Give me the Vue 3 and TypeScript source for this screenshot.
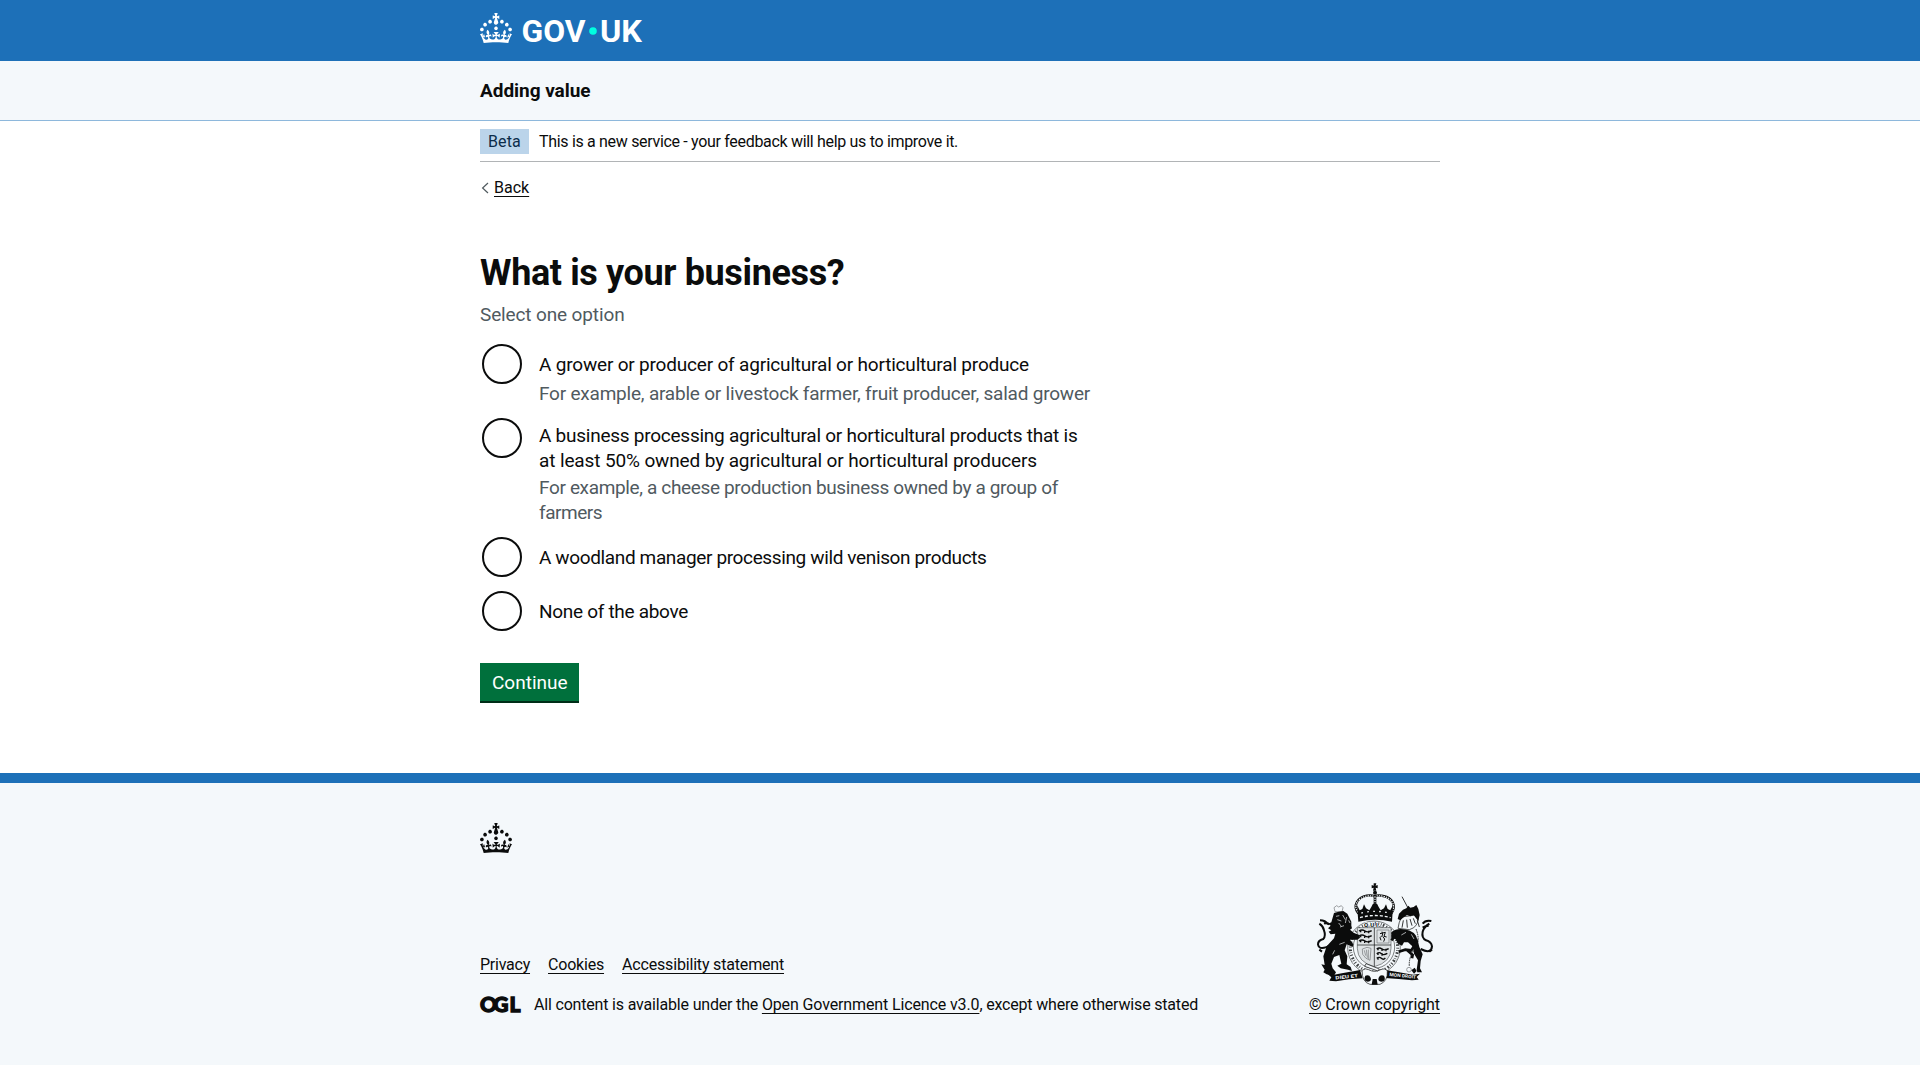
<script setup lang="ts">
import { ref } from 'vue'

interface TextLine {
  text: string
  spacing: number
}
interface Option {
  id: string
  label: TextLine[]
  hint: TextLine[]
  lift?: boolean
}

const crownPath =
  'M22.6 10.4c-1 .4-2-.1-2.4-1-.4-.9.1-2 1-2.4.9-.4 2 .1 2.4 1s-.1 2-1 2.4m-5.9 6.7c-.9.4-2-.1-2.4-1-.4-.9.1-2 1-2.4.9-.4 2 .1 2.4 1s-.1 2-1 2.4m10.8-3.7c-1 .4-2-.1-2.4-1-.4-.9.1-2 1-2.4.9-.4 2 .1 2.4 1s0 2-1 2.4m3.3 4.8c-1 .4-2-.1-2.4-1-.4-.9.1-2 1-2.4.9-.4 2 .1 2.4 1s-.1 2-1 2.4M17 4.7l2.3 1.2V2.5l-2.3.7-.2-.2.9-3h-3.4l.9 3-.2.2c-.1.1-2.3-.7-2.3-.7v3.4L15 4.7c.1.1.1.2.2.2l-1.3 4c-.1.2-.1.4-.1.6 0 1.1.8 2 1.9 2.2h.7c1-.2 1.9-1.1 1.9-2.1 0-.2 0-.4-.1-.6l-1.3-4c-.1-.2 0-.2.1-.3m-7.6 5.7c.9.4 2-.1 2.4-1 .4-.9-.1-2-1-2.4-.9-.4-2 .1-2.4 1s0 2 1 2.4m-5 3c.9.4 2-.1 2.4-1 .4-.9-.1-2-1-2.4-.9-.4-2 .1-2.4 1s.1 2 1 2.4m-3.2 4.8c.9.4 2-.1 2.4-1 .4-.9-.1-2-1-2.4-.9-.4-2 .1-2.4 1s0 2 1 2.4m14.8 11c4.4 0 8.6.3 12.3.8 1.1-4.5 2.4-7 3.7-8.8l-2.5-.9c.2 1.3.3 1.9 0 2.7-.4-.4-.8-1.1-1.1-2.3l-1.2 4c.7-.5 1.3-.8 2-.9-1.1 2.5-2.6 3.1-3.5 3-1.1-.2-1.7-1.2-1.5-2.1.3-1.2 1.5-1.5 2.1-.1 1.1-2.3-.8-3-2-2.3 1.9-1.9 2.1-3.5.6-5.6-2.1 1.6-2.1 3.2-1.2 5.5-1.2-1.4-3.2-.6-2.5 1.6.9-1.4 2.1-.5 1.9.8-.2 1.1-1.7 2.1-3.5 1.9-2.7-.2-2.9-2.1-2.9-3.6.7-.1 1.9.5 2.9 1.9l.4-4.3c-1.1 1.1-2.1 1.4-3.2 1.4.4-1.2 2.1-3 2.1-3h-5.4s1.7 1.9 2.1 3c-1.1 0-2.1-.2-3.2-1.4l.4 4.3c1-1.4 2.2-2 2.9-1.9-.1 1.5-.2 3.4-2.9 3.6-1.9.2-3.4-.8-3.5-1.9-.2-1.3 1-2.2 1.9-.8.7-2.3-1.2-3-2.5-1.6.9-2.2.9-3.9-1.2-5.5-1.5 2-1.3 3.7.6 5.6-1.2-.7-3.1 0-2 2.3.6-1.4 1.8-1.1 2.1.1.2.9-.3 1.9-1.5 2.1-.9.2-2.4-.5-3.5-3 .6 0 1.2.3 2 .9l-1.2-4c-.3 1.1-.7 1.9-1.1 2.3-.3-.8-.2-1.4 0-2.7l-2.9.9C1.3 23 2.6 25.5 3.7 30c3.7-.5 7.9-.8 12.3-.8'

const options: Option[] = [
  {
    id: 'grower',
    label: [{ text: 'A grower or producer of agricultural or horticultural produce', spacing: -0.191 }],
    hint: [{ text: 'For example, arable or livestock farmer, fruit producer, salad grower', spacing: -0.21 }],
  },
  {
    id: 'processor',
    lift: true,
    label: [
      { text: 'A business processing agricultural or horticultural products that is', spacing: -0.25 },
      { text: 'at least 50% owned by agricultural or horticultural producers', spacing: -0.125 },
    ],
    hint: [
      { text: 'For example, a cheese production business owned by a group of', spacing: -0.353 },
      { text: 'farmers', spacing: -0.45 },
    ],
  },
  {
    id: 'woodland',
    label: [{ text: 'A woodland manager processing wild venison products', spacing: -0.367 }],
    hint: [],
  },
  { id: 'none', label: [{ text: 'None of the above', spacing: -0.3 }], hint: [] },
]

const selected = ref('')
</script>

<template>
  <div class="page">
    <header class="header">
      <div class="container header-inner">
        <svg class="crown" viewBox="0 0 32 30" width="32" height="30"><path :d="crownPath" /></svg>
        <svg class="wordmark" width="122" height="36" viewBox="0 0 122 36">
          <text x="0.5" y="29" textLength="64" lengthAdjust="spacingAndGlyphs">GOV</text>
          <circle cx="72" cy="18" r="3.8" />
          <text x="79" y="29" textLength="42" lengthAdjust="spacingAndGlyphs">UK</text>
        </svg>
      </div>
    </header>
    <section class="service">
      <div class="container"><span class="service-name">Adding value</span></div>
    </section>

    <div class="container">
      <div class="phase">
        <strong class="tag">Beta</strong>
        <span class="phase-text">This is a new service - your feedback will help us to improve it.</span>
      </div>
      <a class="back"><svg width="8" height="12" viewBox="0 0 8 12"><path d="M7 1 1.6 6 7 11" /></svg><span>Back</span></a>

      <main class="main">
        <h1>What is your business?</h1>
        <p class="lead">Select one option</p>
        <form @submit.prevent>
          <label v-for="o in options" :key="o.id" class="option" :class="{ lift: o.lift }">
            <input v-model="selected" type="radio" name="business" :value="o.id" />
            <span class="option-text">
              <span v-for="l in o.label" :key="l.text" class="line" :style="{ letterSpacing: l.spacing + 'px' }">{{ l.text }}</span>
              <span v-if="o.hint.length" class="hint">
                <span v-for="l in o.hint" :key="l.text" class="line" :style="{ letterSpacing: l.spacing + 'px' }">{{ l.text }}</span>
              </span>
            </span>
          </label>
          <button class="continue" type="submit">Continue</button>
        </form>
      </main>
    </div>

    <footer class="footer">
      <div class="container">
        <svg class="crown dark" viewBox="0 0 32 30" width="32" height="30"><path :d="crownPath" /></svg>
        <div class="meta">
          <div>
            <nav class="links">
              <a class="privacy">Privacy</a><a class="cookies">Cookies</a><a class="accessibility">Accessibility statement</a>
            </nav>
            <div class="licence">
              <svg class="ogl" width="42" height="20" viewBox="0 0 42 20">
                <text x="-0.1" y="17.3">O</text><text x="13.2" y="17.3">G</text><text x="29.6" y="17.3">L</text>
              </svg>
              <span class="licence-text">All content is available under the <a>Open Government Licence v3.0</a>, except where otherwise stated</span>
            </div>
          </div>
          <div class="copyright">
            <svg class="arms" viewBox="80 35 354 312" width="118" height="104">
              <!-- royal crown -->
              <path d="M253 39h8l-2 7 6-2v10l-6-2 2 9h-10l2-9-6 2v-10l6 2z" />
              <circle cx="257" cy="67" r="6" />
              <path class="stroke" stroke-width="7" d="M207 130C188 105 206 81 232 76q16-2 24 2 10-5 26-1c26 5 41 28 24 53" />
              <path class="dots" stroke-width="3.5" stroke-dasharray="4 3" d="M206 126C189 105 207 82 232 77q16-2 24 2 10-5 26-1c24 5 39 25 26 48" />
              <path class="stroke" stroke-width="8" d="M257 76v46" />
              <path class="dots" stroke-width="3.5" stroke-dasharray="4 3" d="M257 78v30" />
              <path d="M203 104l8 16 8-4 5-14 6 12 10 6 6-10 4-8 7-4 7 4 4 8 6 10 10-6 6-12 5 14 8 4 8-16-3 50q-50-12-101 0z" />
              <path class="dots" stroke-width="4" stroke-dasharray="9 6" d="M212 142q46-13 92 0" />
              <path class="dots" stroke-width="4" stroke-dasharray="5 13" d="M216 128q40-10 84 0" />
              <!-- garter and shield -->
              <ellipse class="ring" cx="254" cy="232" rx="79" ry="80" />
              <ellipse class="lettering" cx="254" cy="232" rx="71" ry="73" />
              <ellipse class="ring" cx="254" cy="230" rx="62" ry="64" />
              <text class="garter" x="224" y="169">QUI</text>
              <path class="shield" d="M204 172h101v62q0 42-50 55-50-13-51-55z" />
              <path class="stroke" stroke-width="2" d="M255 172v117M204 224h101" />
              <path class="stroke" stroke-width="4" d="M209 182q9-6 18 0t20-1M209 197q9-6 18 0t20-1M209 212q9-6 18 0t20-1M214 178v8m12-6v8m12-7v8M214 193v8m12-6v8m12-7v8M214 208v8m12-6v8m12-7v8M262 236q8-6 16 0t20-1M262 250q8-6 14 0t18-1M262 264q8-6 14 0t12-1M266 232v8m12-6v8m12-7v8M266 246v8m12-6v8M266 260v8" />
              <path class="gray" d="M263 179h36v39h-36zM219 236q15-9 26-2l-3 36q-14-4-22-18zM225 240l4 16M231 238l3 24M237 238v28" />
              <path class="stroke" stroke-width="3" d="M278 184l2 10-8 8 3 8M272 190l16-4-4 12 8 2M280 198l6 8-3 8" />
              <!-- lion -->
              <path class="gray" d="M137 124l-3-12 8-6 6 4 8-4 5 6-3 12z" />
              <path class="stroke" stroke-width="6" d="M128 222q-38 22-42 0 0-12 16-16 8-10 2-26-2-12-14-20m2-10q16 0 24 12M90 238l8 6M104 160q8-4 16 2" />
              <path d="M134 128l14-4 14-2 12 8 6 12 6 12 0 12 2 8-6 4 12 10 16 6 2 8-8 6-22 0 10 14-2 8-18-8-6 18 8 18-2 24 12 8 4 12-12-4-22-4-10-8 12-6-6-26-16 6-8 20 4 14 10 12-6 10-22-4-10-6 4-8-10-16 10 2-4-26 10-30 22-24 4-14-14 2-6-8 8-4-10-6 8-8-8-6 10-4z" />
              <path class="cut" d="M140 138l10-2m-6 12 12 4m4-18 8 14m4-8-4 18m-20 0 8 10M150 222l16-6M130 252l6-12M152 170l12-4M178 150l4 8" />
              <!-- unicorn -->
              <path class="stroke" stroke-width="2.5" d="M338 79l17 32" />
              <path class="stroke" stroke-width="6" d="M394 236q32 16 34-8-2-14-18-18-14-8-10-26 4-14 20-24m6-8q-18-4-26 8M428 238l-8 6M400 172q8-6 18-6" />
              <path class="fringe" d="M336 140q-8 18-10 34l34 4q26-8 26-32l-6-12z" />
              <path d="M325 146l4-16 12-12 10-4 6-8 6 6 10-2 8-6 6 12 4 18-4 18-8-10-6-8-10 4-10-4-12 8-8 8z" />
              <path class="stroke" stroke-width="2.5" d="M342 150l-4 22M352 148l2 24M362 146l6 20M372 144l6 16M384 150l6 20" />
              <path d="M306 186q12-10 28-10 32 0 46 20l6 18-2 20-10-2-18-16-12 0-6 10-12-6-8-14-12-2z" />
              <path d="M384 206l6 24 10 22-6 20-2 22 6 12h-14l-2-8 4-28-12-20-4-24z" />
              <path class="stroke" stroke-width="8" d="M376 224l-10 16-18-2-20 6M352 238l18 16-2 10M318 196l-12 14" />
              <path class="stroke" stroke-width="2.5" stroke-dasharray="5 2" d="M380 176q16 40-8 66-14 22-12 46" />
              <path class="cut" d="M350 186l-14 8M366 192l8 14" />
              <circle class="gray" cx="359" cy="298" r="7" />
              <path d="M366 300l10-8 6 10-8 8z" />
              <!-- motto scrolls and base -->
              <path d="M114 310l20 3q50-9 78-14l8 25q-42 2-80 9l-20-2 6-10zM392 310l-20 3q-46-7-78-13l-6 23q40 2 80 7l20-2-6-8z" />
              <text x="138" y="324" textLength="68" lengthAdjust="spacingAndGlyphs" transform="rotate(-6 172 318)">DIEU ET</text>
              <text x="300" y="321" textLength="80" lengthAdjust="spacingAndGlyphs" transform="rotate(6 340 318)">MON DROIT</text>
              <path class="light-fill" d="M218 300q10-8 20-2 18 10 36 0 14-6 20 4 2 30-22 40h-30q-24-6-24-42z" />
              <path d="M228 316q12-4 16 6t-8 12q-16-2-8-18zM284 316q-12-4-16 6t8 12q16-2 8-18zM250 326h12l3 17h-18z" />
              <path class="light-fill" d="M226 288l40 14 4-6-40-16z" />
            </svg>
            <a>© Crown copyright</a>
          </div>
        </div>
      </div>
    </footer>
  </div>
</template>

<style>
body {
  background: #fff;
}
</style>

<style scoped>
.page {
  font-family: Roboto, "Liberation Sans", sans-serif;
  font-size: 16px;
  line-height: 20px;
  color: #0b0c0c;
  min-height: 1065px;
  display: flex;
  flex-direction: column;
  white-space: nowrap;
}
.container {
  width: 960px;
  margin: 0 auto;
}
.header {
  height: 61px;
  background: #1d70b8;
}
.header-inner {
  display: flex;
  align-items: flex-start;
  gap: 9px;
  padding-top: 13px;
}
.crown {
  display: block;
  fill: #fff;
}
.crown.dark {
  fill: #0b0c0c;
}
.wordmark {
  overflow: visible;
  fill: #fff;
  font: 700 31px Roboto, sans-serif;
}
.wordmark circle {
  fill: #00ffe0;
}
.service {
  height: 59px;
  background: #f4f8fb;
  border-bottom: 1px solid #8eb8dc;
  font-size: 19px;
  font-weight: 700;
  line-height: 25px;
}
.service .container {
  padding-top: 17px;
}
.service-name {
  letter-spacing: -0.04px;
}
.phase {
  display: flex;
  align-items: center;
  height: 25px;
  padding: 8px 0 7px;
  border-bottom: 1px solid #b1b4b6;
}
.tag {
  box-sizing: border-box;
  width: 49px;
  height: 25px;
  padding: 3px 8px 2px;
  margin-right: 10px;
  background: #bbd4ea;
  color: #0c2d4a;
  font-weight: 400;
  letter-spacing: 0.1px;
}
.phase-text {
  padding-top: 1px;
  letter-spacing: -0.318px;
}
.back {
  display: flex;
  align-items: center;
  width: max-content;
  margin-top: 16px;
}
.back svg {
  margin: 0 5px 0 1px;
  fill: none;
  stroke: #505a5f;
  stroke-width: 1.2;
}
.back span,
.footer a {
  text-decoration: underline;
  text-decoration-thickness: 1px;
  text-underline-offset: 2.5px;
}
.main {
  padding-top: 55px;
  height: 520px;
}
h1 {
  margin: 0;
  font-size: 36px;
  line-height: 40px;
  font-weight: 700;
  letter-spacing: -0.37px;
}
.lead {
  margin: 9px 0 15px;
  font-size: 19px;
  line-height: 25px;
  letter-spacing: -0.13px;
  color: #505a5f;
}
.option {
  display: flex;
  align-items: flex-start;
  min-height: 44px;
  margin-bottom: 10px;
  font-size: 19px;
  line-height: 25px;
}
.option input {
  appearance: none;
  box-sizing: border-box;
  width: 40px;
  height: 40px;
  margin: 2px 17px 2px 2px;
  border: 2px solid #0b0c0c;
  border-radius: 50%;
}
.option-text {
  padding-top: 10px;
}
.line,
.hint {
  display: block;
}
.hint {
  margin-top: 4px;
  color: #505a5f;
}
.lift .option-text {
  padding-top: 7px;
}
.lift .hint {
  margin-top: 2px;
}
.continue {
  display: block;
  width: 99px;
  height: 38px;
  margin: 30px 0 0;
  padding: 0 12px;
  border: 0;
  background: #00703c;
  box-shadow: 0 2px 0 #002d18;
  color: #fff;
  font: 19px/25px Roboto, sans-serif;
  text-align: left;
  white-space: nowrap;
}
.footer {
  flex: 1;
  border-top: 10px solid #1d70b8;
  background: #f4f8fb;
  padding-top: 40px;
}
.meta {
  display: flex;
  justify-content: space-between;
  align-items: flex-end;
  margin-top: 29px;
}
.links {
  display: flex;
  gap: 18px;
  margin-bottom: 20px;
}
.privacy {
  letter-spacing: -0.24px;
}
.cookies {
  letter-spacing: -0.2px;
}
.accessibility {
  letter-spacing: -0.175px;
}
.licence {
  display: flex;
  align-items: center;
}
.licence-text {
  letter-spacing: -0.18px;
}
.licence-text a {
  letter-spacing: -0.129px;
}
.ogl {
  overflow: visible;
  margin-right: 12px;
  fill: #0b0c0c;
  stroke: #0b0c0c;
  stroke-width: 1.3;
  font: 900 21px Lato, sans-serif;
}
.copyright {
  display: flex;
  flex-direction: column;
  align-items: flex-end;
}
.copyright a {
  letter-spacing: -0.087px;
}
.arms {
  display: block;
  margin: 0 6px 9px 0;
  fill: #0b0c0c;
}
.arms .stroke {
  fill: none;
  stroke: #0b0c0c;
}
.arms .dots {
  fill: none;
  stroke: #f4f8fb;
}
.arms .cut {
  fill: none;
  stroke: #f4f8fb;
  stroke-width: 2;
}
.arms .gray {
  fill: none;
  stroke: #6f7375;
  stroke-width: 2;
}
.arms .ring {
  fill: #f4f8fb;
  stroke: #3c3f40;
  stroke-width: 2;
}
.arms .lettering {
  fill: none;
  stroke: #3c3f40;
  stroke-width: 9;
  stroke-dasharray: 3 5 2 4 5 6;
}
.arms .shield {
  fill: #dfe3e5;
  stroke: #55595b;
  stroke-width: 2;
}
.arms .fringe,
.arms .light-fill {
  fill: #f4f8fb;
  stroke: #0b0c0c;
  stroke-width: 2;
}
.arms text {
  fill: #f4f8fb;
  font: 700 14px Roboto, sans-serif;
}
.arms .garter {
  fill: #0b0c0c;
  stroke: #f4f8fb;
  stroke-width: 4;
  paint-order: stroke;
  font-size: 18px;
  letter-spacing: 6px;
}
</style>
